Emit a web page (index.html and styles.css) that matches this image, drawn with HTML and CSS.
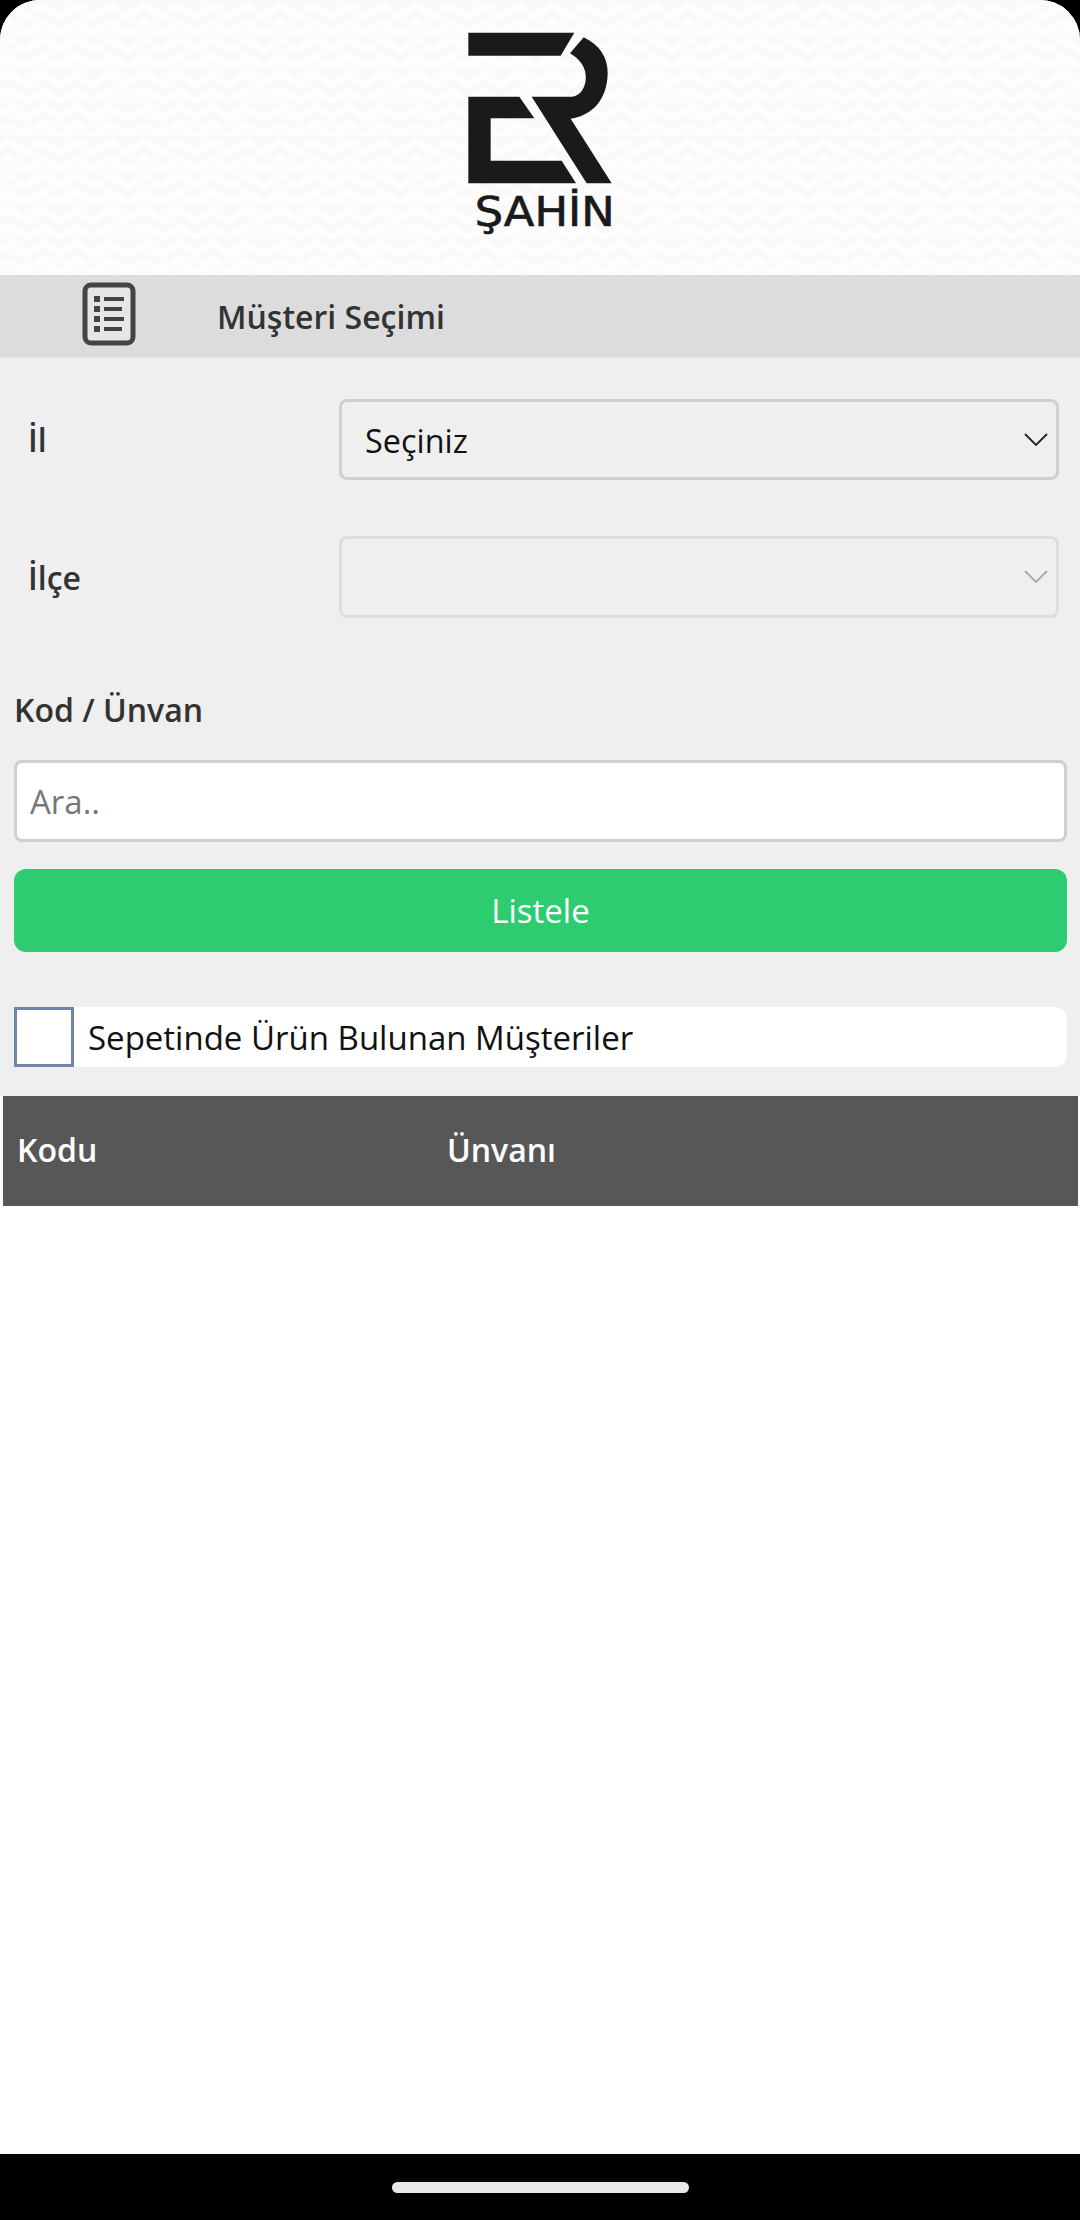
FILE: index.html
```html
<!DOCTYPE html>
<html lang="tr">
<head>
<meta charset="utf-8">
<title>Müşteri Seçimi</title>
<link rel="stylesheet" href="styles.css">
</head>
<body>
<div class="screen">
  <header class="brand">
    <svg class="logo" viewBox="0 0 600 720" width="200" height="240" aria-label="ER Şahin">
      <g fill="#1a1a1a">
        <path d="M85 68H403L362 137H85Z"/>
        <path d="M431 82C480 105 504 145 503 190C502 270 455 318 392 326L515 520H440L275 260H395C425 258 440 225 437 195C434 165 415 145 390 130Z"/>
        <path d="M85 260H238L283 325H152V452H365L408 520H85Z"/>
      </g>
      <text class="logo-text" x="104" y="648" textLength="420" lengthAdjust="spacingAndGlyphs">ŞAHİN</text>
    </svg>
  </header>
  <div class="titlebar">
    <svg class="title-icon" viewBox="0 0 54 64" width="54" height="64">
      <rect x="3" y="3" width="48" height="58" rx="6" fill="#e6e6e6" stroke="#444" stroke-width="5"/>
      <g fill="#444">
        <rect x="12" y="14" width="6" height="6"/><rect x="22" y="15" width="20" height="4"/>
        <rect x="12" y="24" width="6" height="6"/><rect x="22" y="25" width="18" height="4"/>
        <rect x="12" y="34" width="6" height="6"/><rect x="22" y="35" width="20" height="4"/>
        <rect x="12" y="44" width="6" height="6"/><rect x="22" y="45" width="18" height="4"/>
      </g>
    </svg>
    <h1 class="title">Müşteri Seçimi</h1>
  </div>
  <main class="panel">
    <div class="field-row">
      <label class="field-label" for="il">İl</label>
      <div class="select-wrap">
        <select id="il" class="select"><option>Seçiniz</option></select>
        <svg class="chevron" viewBox="0 0 24 14" width="24" height="14"><path d="M1 1L12 12L23 1" fill="none" stroke="#222" stroke-width="1.8"/></svg>
      </div>
    </div>
    <div class="field-row field-row-second">
      <label class="field-label" for="ilce">İlçe</label>
      <div class="select-wrap">
        <select id="ilce" class="select" disabled><option></option></select>
        <svg class="chevron" viewBox="0 0 24 14" width="24" height="14"><path d="M1 1L12 12L23 1" fill="none" stroke="#aaa" stroke-width="1.8"/></svg>
      </div>
    </div>
    <label class="search-label" for="ara">Kod / Ünvan</label>
    <input id="ara" class="search" type="text" placeholder="Ara..">
    <button class="list-btn" type="button">Listele</button>
    <label class="check-row">
      <input class="check" type="checkbox">
      <span>Sepetinde Ürün Bulunan Müşteriler</span>
    </label>
  </main>
  <section class="results">
    <table class="table">
      <thead><tr><th class="col-code">Kodu</th><th>Ünvanı</th></tr></thead>
    </table>
  </section>
  <footer class="navbar"><span class="home-pill"></span></footer>
</div>
</body>
</html>
```
FILE: styles.css
```css
* { box-sizing: border-box; }
html, body { margin: 0; padding: 0; background: #000; }
body { width: 1080px; height: 2220px; overflow: hidden; font-family: "Open Sans", sans-serif; }
.screen { display: flex; flex-direction: column; width: 1080px; height: 2220px; background: #fff; border-radius: 40px 40px 0 0; overflow: hidden; }

.brand { height: 275px; flex: none; display: flex; align-items: flex-start; justify-content: center; padding-top: 10px;
  background-color: #fbfbfb;
  background-image: url("data:image/svg+xml,%3Csvg xmlns='http://www.w3.org/2000/svg' width='34' height='34'%3E%3Cpath d='M-8 17L8.500 5L25.500 17L42 5M-8 34L8.500 22L25.500 34L42 22' fill='none' stroke='%23fefefe' stroke-width='5'/%3E%3Cpath d='M-8 25L8.500 13L25.500 25L42 13M-8 8L8.500 -4L25.500 8L42 -4' fill='none' stroke='%23f9f9f9' stroke-width='4'/%3E%3C/svg%3E"); }
.logo { display: block; }
.logo-text { font-family: "DejaVu Sans", sans-serif; font-size: 120px; fill: #1a1a1a; stroke: #1a1a1a; stroke-width: 2px; }

.titlebar { height: 83px; flex: none; display: flex; align-items: center; padding-left: 82px; background: #dcdcdc; border-bottom: 1px solid #e4e4e4; }
.title-icon { flex: none; margin-bottom: 4px; }
.title { margin: 0 0 0 81px; font-size: 32px; font-weight: 600; color: #333; }

.panel { flex: none; height: 738px; padding: 41px 14px 0; background: #efefef; display: flex; flex-direction: column; }
.field-row { display: flex; align-items: center; height: 81px; }
.field-row-second { margin-top: 56px; height: 82px; }
.field-label { width: 325px; padding-left: 14px; font-size: 32px; font-weight: 600; color: #333; }
.select-wrap { position: relative; width: 720px; height: 100%; }
.select { appearance: none; width: 100%; height: 100%; padding: 1px 23px 0; font: 400 32.4px "Open Sans", sans-serif; color: #111; background: #efefef; border: 3px solid #cfcfcf; border-radius: 8px; }
.select:disabled { border-color: #d8d8d8; }
.chevron { position: absolute; right: 11px; top: 34px; }

.search-label { margin-top: 70px; height: 44px; line-height: 44px; font-size: 32px; font-weight: 600; color: #333; }
.search { margin-top: 28px; width: 1053px; height: 82px; padding: 0 13px; font: 400 33px "Open Sans", sans-serif; background: #fff; border: 3px solid #cfcfcf; border-radius: 8px; }
.search::placeholder { color: #777; opacity: 1; }
.list-btn { margin-top: 27px; width: 1053px; height: 83px; border: 0; border-radius: 12px; background: #2ecc71; color: #fff; font: 400 33px "Open Sans", sans-serif; }
.check-row { margin-top: 55px; width: 1053px; height: 60px; display: flex; align-items: center; gap: 14px; background: #fff; border-radius: 12px; font-size: 33px; color: #111; }
.check { appearance: none; margin: 0; width: 60px; height: 60px; flex: none; background: #fff; border: 3px solid #7185a8; }

.results { flex: 1; padding: 0 3px; background: #fff; }
.table { width: 1075px; border-collapse: collapse; table-layout: fixed; }
.table th { height: 110px; padding: 0 14px 3px; text-align: left; background: #575757; color: #fff; font-size: 32px; font-weight: 600; }
.table .col-code { width: 430px; }

.navbar { height: 66px; flex: none; display: flex; align-items: center; justify-content: center; background: #000; }
.home-pill { width: 297px; height: 11px; border-radius: 6px; background: #e8e8e8; }
```
